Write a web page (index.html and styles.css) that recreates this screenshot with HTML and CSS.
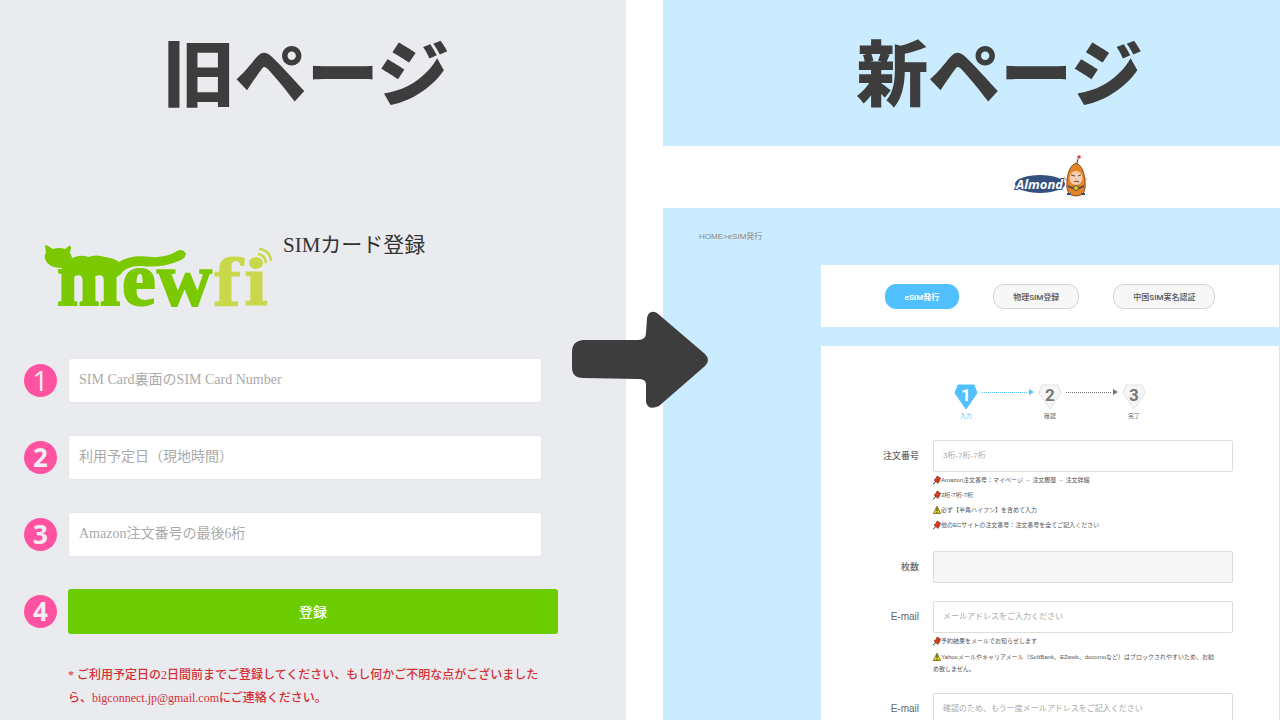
FILE: index.html
```html
<!DOCTYPE html>
<html lang="ja">
<head>
<meta charset="utf-8">
<title>旧ページ / 新ページ</title>
<link rel="stylesheet" href="styles.css">
</head>
<body>
<main class="compare">
  <section class="side old">
    <h1 class="side-title">旧ページ</h1>
    <header class="brand">
      <svg class="mewfi" width="228" height="64" viewBox="0 0 228 64" role="img" aria-label="mewfi">
        <g fill="#7bc900">
          <path d="M0 1Q0-1 3 1L8 4Q15 2 20 4L24 1Q26 0 26 3L25 8Q27 11 27 13Q37 9 43 12Q51 9 60 12Q69 13 74 17Q86 9 107 12Q121 13 132 6Q138 3 141 9Q140 15 128 18Q115 23 96 21Q80 21 75 30L70 33L60 27L46 30L34 27L28 33H17V23Q3 23 0 14Q-1 10 1 8Z"/>
          <text class="logo-mew" y="60"><tspan x="12">m</tspan><tspan x="77">e</tspan><tspan x="112">w</tspan></text>
        </g>
        <g fill="#c9d84b">
          <text class="logo-fi" y="60"><tspan x="168">f</tspan><tspan x="199">ı</tspan></text>
          <ellipse cx="211" cy="18" rx="7" ry="6"/>
          <path d="M213 9Q220 10 221 18M214 4Q225 5 226 16" fill="none" stroke="#c9d84b" stroke-width="2.5"/>
        </g>
      </svg>
      <h2 class="brand-title">SIMカード登録</h2>
    </header>
    <form class="old-form">
      <div class="row"><label class="num thin" for="o1">1</label><input class="old-input" id="o1" type="text" placeholder="SIM Card裏面のSIM Card Number"></div>
      <div class="row"><label class="num" for="o2">2</label><input class="old-input" id="o2" type="text" placeholder="利用予定日（現地時間）"></div>
      <div class="row"><label class="num" for="o3">3</label><input class="old-input" id="o3" type="text" placeholder="Amazon注文番号の最後6桁"></div>
      <div class="row"><span class="num">4</span><button class="old-submit" type="button">登録</button></div>
      <p class="old-note">* ご利用予定日の2日間前までご登録してください、もし何かご不明な点がございました<br>ら、bigconnect.jp@gmail.comにご連絡ください。</p>
    </form>
  </section>

  <section class="side new">
    <h1 class="side-title">新ページ</h1>
    <header class="site-head">
      <svg width="74" height="46" viewBox="0 0 74 46" role="img" aria-label="Almond">
        <ellipse cx="26" cy="30" rx="25" ry="9" fill="#34507f"/>
        <text class="logo-almond" x="2" y="35">Almond</text>
        <path d="M62 13L64 5" stroke="#555" stroke-width="1.2"/>
        <circle cx="65" cy="3" r="1.8" fill="#d9444f"/>
        <path d="M54 27L50 23M70 28L73 24" stroke="#efc4a4" stroke-width="2"/>
        <path d="M62 9Q70 12 71 27Q73 42 62 42Q51 42 53 27Q54 12 62 9Z" fill="#e38428" stroke="#8c5427"/>
        <ellipse cx="62" cy="24" rx="6.5" ry="7" fill="#f7cdb2"/>
        <path d="M57 21L61 22M64 22L67 21M60 28Q62 26 65 28" stroke="#68452f" fill="none"/>
        <path d="M54 32Q62 37 70 32" stroke="#4a4a55" stroke-width="1.5" fill="none"/>
        <circle cx="62" cy="34" r="2.5" fill="#e5bd45" stroke="#665126"/>
        <path d="M53 40H57M67 40H71" stroke="#374d77" stroke-width="2"/>
      </svg>
    </header>
    <nav class="crumbs"><a href="#">HOME</a>&gt;<span>eSIM発行</span></nav>
    <div class="content">
      <div class="panel tabs">
        <button class="tab active" type="button">eSIM発行</button>
        <button class="tab" type="button">物理SIM登録</button>
        <button class="tab" type="button">中国SIM実名認証</button>
      </div>
      <div class="panel sheet">
        <ol class="steps">
          <li class="step current"><span class="gem"><svg width="24" height="26" viewBox="0 0 24 26"><path d="M4 1H20L23 9L12 25L1 9Z"/></svg><b>1</b></span><span>入力</span></li>
          <li class="link current" aria-hidden="true"></li>
          <li class="step"><span class="gem"><svg width="24" height="26" viewBox="0 0 24 26"><path d="M4 1H20L23 9L12 25L1 9Z"/></svg><b>2</b></span><span>確認</span></li>
          <li class="link" aria-hidden="true"></li>
          <li class="step"><span class="gem"><svg width="24" height="26" viewBox="0 0 24 26"><path d="M4 1H20L23 9L12 25L1 9Z"/></svg><b>3</b></span><span>完了</span></li>
        </ol>
        <svg class="defs" width="0" height="0" aria-hidden="true">
          <symbol id="pin" viewBox="0 0 8 10"><path d="M0 9.5L3 6" stroke="#333"/><path d="M4 1L7.500 3L6.500 6L5 8.500L1 5L3 3.500Z" fill="#d93a1d" stroke="#7b2a20" stroke-width=".6"/></symbol>
          <symbol id="warn" viewBox="0 0 8 10"><path d="M4 1L7.500 8.500H.5Z" fill="#f3df19" stroke="#66600f" stroke-width=".8"/><path d="M4 3V6M4 6.700V8" stroke="#222"/></symbol>
        </svg>
        <form class="new-form">
          <div class="field">
            <label for="n1">注文番号</label>
            <div>
              <input id="n1" type="text" placeholder="3桁-7桁-7桁">
              <ul class="notes">
                <li><svg class="ico"><use href="#pin"/></svg>Amazon注文番号：マイページ → 注文履歴 → 注文詳細</li>
                <li><svg class="ico"><use href="#pin"/></svg>3桁-7桁-7桁</li>
                <li><svg class="ico"><use href="#warn"/></svg>必ず【半角ハイフン】を含めて入力</li>
                <li><svg class="ico"><use href="#pin"/></svg>他のECサイトの注文番号：注文番号を全てご記入ください</li>
              </ul>
            </div>
          </div>
          <div class="field">
            <label for="n2">枚数</label>
            <div><input id="n2" class="filled" type="text" readonly></div>
          </div>
          <div class="field">
            <label class="latin" for="n3">E-mail</label>
            <div>
              <input id="n3" type="email" placeholder="メールアドレスをご入力ください">
              <ul class="notes">
                <li><svg class="ico"><use href="#pin"/></svg>予約結果をメールでお知らせします</li>
                <li class="long"><svg class="ico"><use href="#warn"/></svg>Yahooメールやキャリアメール（SoftBank、EZweb、docomoなど）はブロックされやすいため、お勧<br>め致しません。</li>
              </ul>
            </div>
          </div>
          <div class="field">
            <label class="latin" for="n4">E-mail</label>
            <div><input id="n4" type="email" placeholder="確認のため、もう一度メールアドレスをご記入ください"></div>
          </div>
        </form>
      </div>
    </div>
  </section>

  <svg class="arrow" width="138" height="100" viewBox="0 0 138 100" aria-hidden="true">
    <path d="M12 30H67Q75 30 75 23L76 8Q78-1 86 3L134 44Q140 50 134 56L88 96Q77 101 75 92L75 74Q75 69 67 69L12 68Q1 68 1 57V42Q1 31 12 30Z"/>
  </svg>
</main>
</body>
</html>
```
FILE: styles.css
```css
* { box-sizing: border-box; }

body {
  margin: 0;
  font-family: "Liberation Sans", "Noto Sans CJK JP", sans-serif;
}

h1, h2, p, ul, ol { margin: 0; padding: 0; }
ul, ol { list-style: none; }
input, button { font-family: inherit; }

.compare {
  position: relative;
  display: grid;
  grid-template-columns: 626fr 617fr;
  column-gap: 37px;
  height: 100vh;
  overflow: hidden;
  background: #fff;
}

.side { min-width: 0; }
.old {
  background: #e9ebef;
  font-family: "Liberation Serif", "Noto Sans CJK JP", serif;
}
.new { background: #cbecff; }

.side-title {
  height: 146px;
  padding-right: 14px;
  font: 900 72px/138px "Noto Sans CJK JP", sans-serif;
  color: #3d3d3d;
  text-align: center;
}
.new .side-title { padding-left: 56px; padding-right: 0; }

/* old page */
.brand {
  display: flex;
  gap: 10px;
  padding: 84px 0 0 45px;
}
.mewfi { margin-top: 15px; flex: none; overflow: visible; }
.logo-mew {
  font: bold 76px "Liberation Serif", serif;
  stroke: #7bc900;
  stroke-width: 2;
}
.logo-fi {
  font: bold 64px "DejaVu Serif", serif;
  stroke: #c9d84b;
  stroke-width: 1;
}
.brand-title {
  font-size: 21px;
  font-weight: 400;
  line-height: 30px;
  color: #333;
}

.old-form {
  display: grid;
  row-gap: 32px;
  padding: 49px 68px 0 24px;
}
.row {
  display: flex;
  align-items: center;
  gap: 11px;
}
.num {
  flex: none;
  width: 33px;
  height: 33px;
  border-radius: 50%;
  background: #ff52a1;
  color: #f3eef4;
  font: bold 26px/33px "Open Sans", sans-serif;
  text-align: center;
}
.num.thin { font-weight: 400; font-size: 28px; }
.old-input {
  flex: 1;
  min-width: 0;
  height: 45px;
  margin-right: 16px;
  padding: 0 10px 2px;
  border: 1px solid #e4e6ea;
  border-radius: 3px;
  background: #fff;
  font-size: 14px;
}
.old-input::placeholder { color: #aaa; opacity: 1; }
.old-submit {
  flex: 1;
  height: 45px;
  padding-bottom: 3px;
  border: 0;
  border-radius: 3px;
  background: #6bcd00;
  color: #fff;
  font-size: 14px;
  font-weight: 500;
}
.old-note {
  margin-top: -2px;
  padding-left: 44px;
  font-size: 12px;
  font-weight: 500;
  line-height: 23px;
  color: #d62f35;
  white-space: nowrap;
}

/* new page */
.site-head {
  display: flex;
  justify-content: center;
  height: 62px;
  padding: 8px 0 0 158px;
  background: #fff;
}
.logo-almond {
  font: italic bold 13px "Open Sans", sans-serif;
  fill: #fff;
  stroke: #34507f;
  stroke-width: 2;
  paint-order: stroke;
}
.crumbs {
  height: 57px;
  padding: 18px 36px;
  font-size: 8px;
  line-height: 22px;
  color: #888;
}
.crumbs a { color: inherit; text-decoration: none; }

.content {
  display: grid;
  row-gap: 19px;
  padding: 0 1px 0 158px;
}
.panel { background: #fff; }
.tabs {
  display: flex;
  justify-content: center;
  gap: 34px;
  height: 62px;
  padding: 19px 0;
}
.tab {
  height: 25px;
  padding: 0 19px;
  border: 1px solid #d4d4d4;
  border-radius: 11px;
  background: #f7f7f7;
  color: #555;
  font-family: "Roboto", "Noto Sans CJK JP", sans-serif;
  font-size: 8px;
  font-weight: 500;
}
.tab.active {
  border-color: #51c0ff;
  background: #51c0ff;
  color: #fff;
  font-weight: 700;
}

.sheet { padding-top: 38px; }
.steps {
  display: flex;
  justify-content: center;
}
.step {
  display: grid;
  justify-items: center;
  width: 24px;
  font-size: 6px;
  line-height: 12px;
  color: #666;
}
.gem { display: grid; place-items: center; }
.gem svg, .gem b { grid-area: 1 / 1; }
.gem path { fill: #f6f6f6; stroke: #e2e2e2; }
.gem b { font: bold 17px/22px "Roboto", sans-serif; color: #777; align-self: start; }
.step.current { color: #51c0ff; }
.step.current path { fill: #51c0ff; stroke: #51c0ff; }
.step.current b { color: #fff; }
.link {
  display: flex;
  align-items: center;
  width: 60px;
  height: 16px;
  padding: 0 4px;
  color: #777;
}
.link::before {
  content: "";
  flex: 1;
  border-top: 1px dotted;
}
.link::after {
  content: "";
  margin-left: 2px;
  border: 3px solid transparent;
  border-left: 5px solid;
  border-right: 0;
}
.link.current { color: #51c0ff; }

.new-form { padding: 18px 46px 0 0; }
.field {
  display: grid;
  grid-template-columns: 98px 1fr;
  column-gap: 14px;
  margin-bottom: 18px;
}
.field label {
  font-size: 9px;
  font-weight: 500;
  line-height: 32px;
  color: #666;
  text-align: right;
}
.field label.latin { font-size: 10px; }
.field input {
  display: block;
  width: 100%;
  height: 32px;
  padding: 0 9px 2px;
  border: 1px solid #ddd;
  border-radius: 2px;
  background: #fff;
  font-size: 8px;
}
.field input.filled { background: #f7f7f7; }
.field input::placeholder { color: #aaa; opacity: 1; }
.notes {
  padding-top: 1px;
  font-size: 6px;
  line-height: 15px;
  color: #555;
  white-space: nowrap;
}
.notes .long { padding-top: 2px; line-height: 12px; }
.ico {
  width: 8px;
  height: 10px;
  vertical-align: middle;
}
.notes li { min-height: 15px; }
.defs { display: block; }

.arrow {
  position: absolute;
  top: 50%;
  left: 50%;
  margin: -50px 0 0 -69px;
  fill: #3d3d3d;
}
```
